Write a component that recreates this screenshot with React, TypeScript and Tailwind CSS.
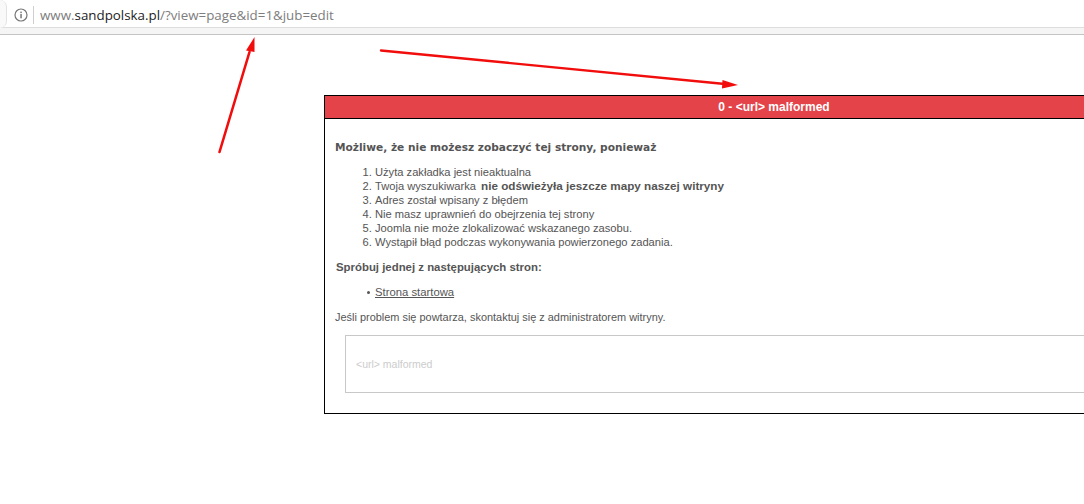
export default function App() {
  return (
    <div className="relative w-[1084px] h-[504px] overflow-hidden bg-white font-['Liberation_Sans',sans-serif] text-[#555]">
      <div className="h-[35px] border-b border-[#c4c4c4] bg-[#f5f5f5]">
        <div className="h-[28px] flex items-center bg-white border-b border-[#dedede]">
          <div className="w-[7px] h-[28px] rounded-r-full border-r border-[#e2e2e2] bg-[#f9f9f9]" />
          <svg className="ml-[7px] mt-[2px]" width="14" height="14" viewBox="0 0 14 14" fill="none">
            <circle cx="7" cy="7" r="6" stroke="#777" strokeWidth="1.2" />
            <rect x="6.3" y="6" width="1.5" height="4.3" fill="#777" />
            <rect x="6.3" y="3.6" width="1.5" height="1.5" fill="#777" />
          </svg>
          <div className="ml-[5px] mr-[6px] w-px h-[18px] mt-[2px] bg-[#cfcfcf]" />
          <div className="mt-[4px] text-[13.35px] font-['Open_Sans',sans-serif] text-[#7d7d7d] whitespace-nowrap">
            www.<span className="text-[#222]">sandpolska.pl</span>/?view=page&amp;id=1&amp;jub=edit
          </div>
        </div>
      </div>

      <div className="ml-[324px] mt-[60px] w-[900px] h-[319px] border border-black">
        <div className="h-[23px] bg-[#e5434a] border-b border-black flex items-center justify-center text-white font-bold text-[12px]">
          0 - &lt;url&gt; malformed
        </div>
        <div className="pl-[10px]">
          <p className="mt-[21px] text-[10.6px] leading-[14px] font-bold font-['DejaVu_Sans',sans-serif] text-[#555]">
            Możliwe, że nie możesz zobaczyć tej strony, ponieważ
          </p>
          <ol className="mt-[11px] pl-[40px] list-decimal text-[11.15px] leading-[14px]">
            <li>Użyta zakładka jest nieaktualna</li>
            <li>Twoja wyszukiwarka <span className="ml-[2px] font-bold text-[11.7px] text-[#555]">nie odświeżyła jeszcze mapy naszej witryny</span></li>
            <li>Adres został wpisany z błędem</li>
            <li>Nie masz uprawnień do obejrzenia tej strony</li>
            <li>Joomla nie może zlokalizować wskazanego zasobu.</li>
            <li>Wystąpił błąd podczas wykonywania powierzonego zadania.</li>
          </ol>
          <p className="mt-[11px] ml-px text-[11.4px] leading-[14px] font-bold">Spróbuj jednej z następujących stron:</p>
          <div className="mt-[11px] pl-[32px] flex items-center gap-[5px] text-[11.3px] leading-[14px]">
            <span className="w-[3px] h-[3px] mt-[1px] rounded-full bg-[#555]" />
            <span className="underline">Strona startowa</span>
          </div>
          <p className="mt-[11px] text-[10.95px] leading-[14px]">Jeśli problem się powtarza, skontaktuj się z administratorem witryny.</p>
          <div className="mt-[11px] ml-[10px] w-[880px] h-[58px] border border-[#c8c8c8] pl-[10px] pt-[2px] flex items-center text-[10.5px] text-[#ccc]">
            &lt;url&gt; malformed
          </div>
        </div>
      </div>

      <svg className="absolute left-0 top-0 pointer-events-none" width="1084" height="504" viewBox="0 0 1084 504" fill="none">
        <line x1="219.5" y1="152" x2="249.5" y2="52" stroke="#f20d0d" strokeWidth="2.6" strokeLinecap="round" />
        <polygon points="254.5,37 246,50.5 254.5,52" fill="#f20d0d" />
        <line x1="381" y1="50.5" x2="725" y2="84" stroke="#f20d0d" strokeWidth="2.4" strokeLinecap="round" />
        <polygon points="738,85 722.5,80 722,88.5" fill="#f20d0d" />
      </svg>
    </div>
  );
}
